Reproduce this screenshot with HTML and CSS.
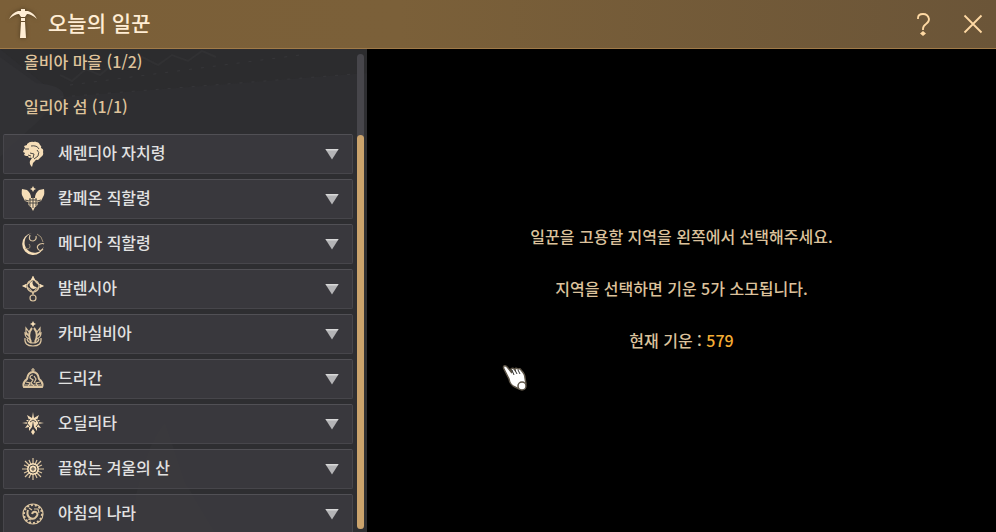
FILE: index.html
```html
<!DOCTYPE html>
<html lang="ko">
<head>
  <meta charset="UTF-8" />
  <meta name="viewport" content="width=device-width, initial-scale=1.0" />
  <title>오늘의 일꾼</title>
  <link rel="stylesheet" href="styles.css">
</head>
<body>
  <header class="title-bar">
    <svg class="title-icon" viewBox="0 0 28 32" aria-hidden="true">
      <path d="M12 1h4v2h3q6 2 9 8q-6-5-10-5l-2 3h-4l-2-3q-4 0-10 5q3-6 9-8h3z" />
      <path d="M12 10h4v3h-4zM12 14h4l1 16h-6z" />
    </svg>
    <h1>오늘의 일꾼</h1>
    <button class="icon-button" type="button" aria-label="도움말">
      <svg viewBox="0 0 26 26"><path d="M8 8V7q0-4 5-4t6 5q0 3-3 5q-3 2-3 5v1" /><path class="fill" d="M13 20l3 2.500l-3 2.500l-3-2.500z" /></svg>
    </button>
    <button class="icon-button" type="button" aria-label="닫기">
      <svg viewBox="0 0 26 26"><path d="M4.500 4.500l17 17M21.500 4.500l-17 17" /></svg>
    </button>
  </header>

  <main class="content">
    <nav class="sidebar" aria-label="지역">
      <!-- 배경 기와지붕 -->
      <svg class="backdrop" viewBox="0 0 367 483" preserveAspectRatio="xMidYMin slice" aria-hidden="true">
        <path class="roof" d="M0 0h367v24L60 48z" />
        <path class="wall" d="M0 8l36 26q28 2 28 14l-64 60z" />
        <path class="tiles" d="M60 26l12 6l14-12l14 6l14-12l14 6l14-12l16 8l14-10l16 6l14-10l14 6" />
        <path class="eaves" d="M70 36L300 6M60 48L367 24" />
        <path class="wall" d="M130 483q10-80 35-110l20 60l30 50z" />
      </svg>

      <div class="region-list">
        <ul class="towns">
          <li><a href="#olvia">올비아 마을 (1/2)</a></li>
          <li><a href="#iliya">일리야 섬 (1/1)</a></li>
        </ul>

        <button class="region" type="button">
          <svg class="emblem" viewBox="0 0 24 26"><path d="M6 3q3-3 7-2q1-1 2 0q3 0 4 3q2 1 1 3q3 1 2 4q1 3-2 5l-3 3q-2-1-3 1l-2 2l-1 4q-3-3-2-6l2-3q-2-1-3 0l-1-2H5l-2-1l1-2l-2-1q1-3 2-4l-1-2l3-1z" /><path class="cut" d="M4 8l4 0M9 12l4 1l-1 4M16 9q3 2 1 6l-4 3M10 5q6-1 8 3M7 14l3 1" /></svg>
          <span>세렌디아 자치령</span>
          <i class="arrow"></i>
        </button>
        <button class="region" type="button">
          <svg class="emblem" viewBox="0 0 24 26"><path d="M12 0l1 2l2 1l-2 1l-1 2l-1-2l-2-1l2-1z" /><path d="M1 3l5 1q4 3 4 8h4q0-5 4-8l5-1q1 5-1 8l-2 4l-3 1q0 4-3 5l-2 4l-2-4q-3-1-3-5l-3-1l-2-4Q0 8 1 3z" /><path class="cut" d="M9 12v8M12 11v11M15 12v8M8 14h8M7 17h10M4 14l4 1M20 14l-4 1" /></svg>
          <span>칼페온 직할령</span>
          <i class="arrow"></i>
        </button>
        <button class="region" type="button">
          <svg class="emblem" viewBox="0 0 24 26"><path d="M11 2A11 11 0 1 0 23 15A10 10 0 1 1 11 2z" /><path class="line" d="M9 4q-2 6 3 6q4-1 3-5M23 13q-1-1-4 0q-4 2-2 5q2 3 5 0" /><path class="thin" d="M16 3q5 2 6 8M4 17q4 2 5-1q0-2-1-3" /></svg>
          <span>메디아 직할령</span>
          <i class="arrow"></i>
        </button>
        <button class="region" type="button">
          <svg class="emblem" viewBox="0 0 24 26"><path class="line" d="M12 1q2 6 9 9q-7 2-9 8q-2-6-9-8q7-3 9-9z" /><circle class="line" cx="12" cy="10" r="6" /><path d="M12 5a4 4 0 1 0 4 6a4 4 0 0 1-4-6zM12 0l2 4h-4zM1 10l4-2v4zM23 10l-4-2v4z" /><circle class="line" cx="12" cy="22" r="3" /></svg>
          <span>발렌시아</span>
          <i class="arrow"></i>
        </button>
        <button class="region" type="button">
          <svg class="emblem" viewBox="0 0 24 26"><path d="M12 0l1 2l2 1l-2 1l-1 2l-1-2l-2-1l2-1z" /><path class="line bold" d="M11 7q-5 6-1 14M13 7q5 6 1 14" /><path class="line" d="M8 11L5 7v4l3 4l-4-3q0 4 4 6M16 11l3-4v4l-3 4l4-3q0 4-4 6M4 17q-1 8 8 8t8-8M6 18q1 4 6 4t6-4" /></svg>
          <span>카마실비아</span>
          <i class="arrow"></i>
        </button>
        <button class="region" type="button">
          <svg class="emblem" viewBox="0 0 24 26"><path class="line" d="M12 2v4M10 4h4" /><path class="line bold" d="M12 6q-5 0-6 7q-5 4-3 8h18q2-4-3-8q-1-7-6-7z" /><path class="line" d="M12 9q-3 0-3 3l3 2l-2 3l3 3M13 10l2 3l-2 4M5 16l4 1l-2 4M19 16l-4 1l2 4M4 19h16" /></svg>
          <span>드리간</span>
          <i class="arrow"></i>
        </button>
        <button class="region" type="button">
          <svg class="emblem" viewBox="0 0 24 26"><path d="M12 1l1 6l5-3l-2 5l3 0l-2 2l6 1l-6 1l3 4l-4-1l0 4l-3-4l-1-6l-1 6l-3 4l0-4l-4 1l3-4l-6-1l6-1l-2-2l3 0l-2-5l5 3z" /><path d="M12 18l2 3l-2 3l-2-3z" /><path class="cut" d="M9 8l-3 4l3 4M15 8l3 4l-3 4M9 11l3-2l3 2" /></svg>
          <span>오딜리타</span>
          <i class="arrow"></i>
        </button>
        <button class="region" type="button">
          <svg class="emblem" viewBox="0 0 24 26"><path class="line" d="M12 2v22M1 13h22M4 5l16 16M20 5L4 21M8 4l8 18M16 4L8 22M3 9l18 8M21 9L3 17" /><circle cx="12" cy="13" r="6" /><circle class="cut" cx="12" cy="13" r="4" /><path class="cut" d="M12 11v4M10 13h4" /></svg>
          <span>끝없는 겨울의 산</span>
          <i class="arrow"></i>
        </button>
        <button class="region" type="button">
          <svg class="emblem" viewBox="0 0 24 26"><circle class="line" cx="12" cy="13" r="10" /><circle class="line dashed" cx="12" cy="13" r="9" /><path class="line bold" d="M7 9q-2 5 2 8q4 2 6-1q3-3 0-5q-3-1-4 2" /><path class="line" d="M13 8h4l1 4M8 7l3 2M7 18l3 1" /></svg>
          <span>아침의 나라</span>
          <i class="arrow"></i>
        </button>
      </div>

      <div class="scrollbar"><div class="thumb"></div></div>
    </nav>

    <section class="message">
      <p>일꾼을 고용할 지역을 왼쪽에서 선택해주세요.</p>
      <p>지역을 선택하면 기운 5가 소모됩니다.</p>
      <p>현재 기운 : <strong>579</strong></p>
    </section>
  </main>

  <!-- 마우스 커서 -->
  <svg class="pointer" viewBox="0 0 26 28" aria-hidden="true">
    <path class="hand" d="M2 2q2-1 4 2l4 5l-1-4q2-2 4 1q0-3 3-1q2-1 3 1q4 4 4 8l1 6l-7 5l-4-2q-5-2-6-8L2 5q-1-2 0-3z" />
    <path class="fingers" d="M10 6l2 5M13 6l2 4M16 6l2 4" />
    <circle class="cuff" cx="20" cy="22" r="4" />
  </svg>
</body>
</html>
```
FILE: styles.css
```css
* {
  margin: 0;
  padding: 0;
  box-sizing: border-box;
}

body {
  height: 100vh;
  display: flex;
  flex-direction: column;
  overflow: hidden;
  font-family: "Noto Sans CJK KR", sans-serif;
  font-size: 16px;
  font-weight: 500;
  background-color: #000;
}

button {
  font: inherit;
  border: none;
  background: none;
  cursor: pointer;
}

/* 상단 제목 */
.title-bar {
  flex: none;
  height: 49px;
  display: flex;
  align-items: center;
  gap: 14px;
  padding: 0 10px 0 9px;
  background: linear-gradient(to right, #7b5f38, #7b6039 40%, #6b5538);
  border-bottom: 1px solid #a07a48;
}

.title-bar h1 {
  flex: 1;
  padding-bottom: 4px;
  font-size: 21px;
  font-weight: 500;
  line-height: 30px;
  color: #ffedd4;
}

.title-icon {
  width: 28px;
  height: 32px;
  margin-right: -3px;
  fill: #ffedd4;
  filter: drop-shadow(0 0 2px #4d3a20);
}

.icon-button {
  width: 26px;
  height: 26px;
  margin-left: 10px;
}

.icon-button svg {
  display: block;
  width: 26px;
  height: 26px;
  fill: none;
  stroke: #ffd9a3;
  stroke-width: 1.8;
}

.icon-button .fill {
  fill: #ffd9a3;
  stroke: none;
}

.content {
  flex: 1;
  min-height: 0;
  display: flex;
}

/* 왼쪽 지역 목록 */
.sidebar {
  position: relative;
  flex: 0 0 367px;
  display: flex;
  gap: 4px;
  padding: 0 3px;
  overflow: hidden;
  background-color: #2e2e31;
}

.backdrop {
  position: absolute;
  top: 0;
  left: 0;
  width: 100%;
  height: 100%;
}

.backdrop .roof {
  fill: #2c2c2e;
}

.backdrop .wall {
  fill: #313134;
}

.backdrop .tiles {
  fill: none;
  stroke: #313133;
  stroke-width: 2;
}

.backdrop .eaves {
  fill: none;
  stroke: #363639;
  stroke-dasharray: 3 9;
}

.region-list {
  position: relative;
  flex: 1;
  display: flex;
  flex-direction: column;
  gap: 5px;
}

.towns {
  display: flex;
  flex-direction: column;
  gap: 21px;
  padding: 0 21px 11px;
  list-style: none;
  line-height: 24px;
}

.towns a {
  color: #dfc39b;
  text-decoration: none;
}

.region {
  flex: none;
  height: 40px;
  display: flex;
  align-items: center;
  gap: 13px;
  padding: 0 13px 0 17px;
  border: 1px solid #47464b;
  border-top-color: #515055;
  border-radius: 2px;
  background-color: rgba(59, 58, 62, 0.92);
  color: #e2e2e2;
  text-align: left;
}

.region:hover {
  background-color: #454449;
}

.region span {
  flex: 1;
  padding-bottom: 5px;
  line-height: 24px;
}

.arrow {
  width: 14px;
  height: 11px;
  background: linear-gradient(#d8d8d8 1px, #b4b4b6 2px);
  clip-path: polygon(0 0, 100% 0, 50% 100%);
}

/* 지역 문양 */
.emblem {
  flex: none;
  width: 24px;
  height: 26px;
  fill: #f6deb8;
}

.emblem .cut {
  fill: none;
  stroke: #4b4844;
  stroke-width: 1;
}

.emblem .line {
  fill: none;
  stroke: #dcc5a0;
  stroke-width: 1.2;
}

.emblem .thin {
  fill: none;
  stroke: #9c8d75;
  stroke-width: 1;
}

.emblem .bold {
  stroke-width: 2;
}

.emblem .dashed {
  stroke-width: 2;
  stroke-dasharray: 2 2;
}

.scrollbar {
  position: relative;
  flex: 0 0 7px;
  display: flex;
  flex-direction: column;
  justify-content: flex-end;
  margin: 5px 0 3px;
  border-radius: 4px;
  background-color: #47464b;
}

.thumb {
  height: 83%;
  border-radius: 4px;
  background-color: #cba36c;
}

/* 오른쪽 안내 */
.message {
  flex: 1;
  display: flex;
  flex-direction: column;
  align-items: center;
  justify-content: center;
  gap: 28px;
  padding-bottom: 6px;
  line-height: 24px;
  color: #dcc29c;
}

.message strong {
  font-weight: 500;
  color: #f5ae35;
}

.pointer {
  position: absolute;
  top: 364px;
  left: 502px;
  width: 26px;
  height: 28px;
  fill: #fff;
  stroke: #5d5548;
  stroke-width: 1.5;
}

.pointer .fingers {
  stroke: #333;
  stroke-width: 1;
}
```
